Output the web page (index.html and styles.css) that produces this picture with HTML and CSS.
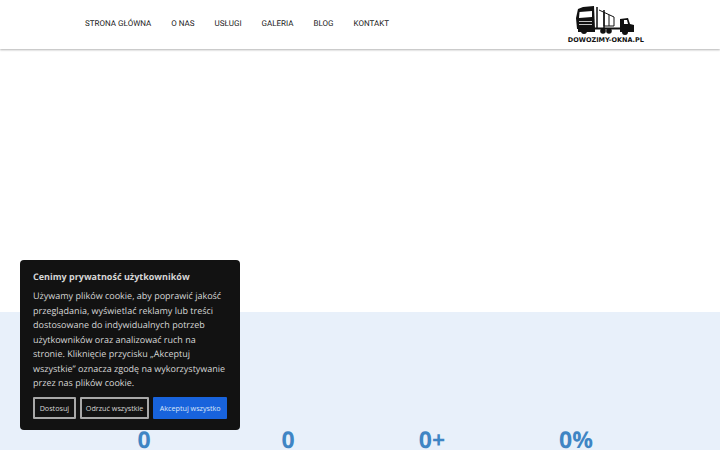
FILE: index.html
```html
<!DOCTYPE html>
<html lang="pl">
<head>
    <meta charset="UTF-8">
    <meta name="viewport" content="width=device-width, initial-scale=1.0">
    <title>Dowozimy-okna.pl</title>
    <link rel="stylesheet" href="styles.css">
</head>
<body>
    <header class="site-header">
        <nav class="main-nav">
            <a href="#">Strona główna</a>
            <a href="#">O nas</a>
            <a href="#">Usługi</a>
            <a href="#">Galeria</a>
            <a href="#">Blog</a>
            <a href="#">Kontakt</a>
        </nav>
        <a class="logo" href="#">
            <svg class="logo-truck" width="60" height="30" viewBox="0 0 60 30">
                <!-- big cab -->
                <path d="M2 3 L7 1 L18 0 L19 23 L1 23 L0 12 Z" fill="#111"/>
                <path d="M3.500 6 L16 5 L16 11 L3 12 Z" fill="#fff"/>
                <path d="M3 15 H16 V15.800 H3 Z M3 18 H16 V18.800 H3 Z" fill="#fff"/>
                <rect x="2" y="23" width="17" height="3" fill="#111"/>
                <circle cx="8" cy="25" r="3" fill="#111"/>
                <!-- window rack -->
                <path d="M21 1 V22 M28 4 V22" stroke="#111" stroke-width="1.500" fill="none"/>
                <path d="M23 4 L38 11 V20 H28 M28 6.500 V20 M33 9 V20" stroke="#111" stroke-width="1" fill="none"/>
                <rect x="18" y="21.500" width="28" height="2" fill="#111"/>
                <circle cx="27" cy="25" r="2.800" fill="#111"/>
                <circle cx="33" cy="25" r="2.800" fill="#111"/>
                <!-- small cab -->
                <path d="M44 13 L52 12 L54 18 L58 19 L58 26 L44 26 Z" fill="#111"/>
                <path d="M48 14 L51 14 L52 18 L48 18 Z" fill="#fff"/>
                <circle cx="49" cy="26" r="3" fill="#111"/>
            </svg>
            <span class="logo-name">DOWOZIMY-OKNA.PL</span>
        </a>
    </header>

    <main>
        <section class="hero"></section>
        <section class="stats">
            <div class="stat">0</div>
            <div class="stat">0</div>
            <div class="stat">0+</div>
            <div class="stat">0%</div>
        </section>
    </main>

    <div class="cookie-box">
        <h2>Cenimy prywatność użytkowników</h2>
        <p>Używamy plików cookie, aby poprawić jakość przeglądania, wyświetlać reklamy lub treści dostosowane do indywidualnych potrzeb użytkowników oraz analizować ruch na stronie. Kliknięcie przycisku „Akceptuj wszystkie” oznacza zgodę na wykorzystywanie przez nas plików cookie.</p>
        <div class="cookie-buttons">
            <button class="btn-outline btn-customize">Dostosuj</button>
            <button class="btn-outline btn-reject">Odrzuć wszystkie</button>
            <button class="btn-accept">Akceptuj wszystko</button>
        </div>
    </div>
</body>
</html>
```

FILE: styles.css
```css
html, body {
    height: 100%;
}
body {
    margin: 0;
    overflow: hidden;
    font-family: 'Open Sans', sans-serif;
    background-color: #fff;
    text-rendering: geometricPrecision;
}
.site-header {
    display: flex;
    justify-content: space-between;
    align-items: flex-start;
    height: 49px;
    padding: 0 76px 0 85px;
    background-color: #fff;
    box-shadow: 0 1px 2px rgba(0,0,0,0.3);
    position: relative;
}
.main-nav {
    display: flex;
    gap: 20px;
    padding-top: 19px;
}
.main-nav a {
    font-family: 'Roboto', sans-serif;
    font-size: 8px;
    line-height: 10px;
    color: #222;
    text-decoration: none;
    text-transform: uppercase;
}
.logo {
    display: flex;
    flex-direction: column;
    align-items: center;
    padding-top: 6px;
    color: #111;
    text-decoration: none;
}
.logo-truck {
    display: block;
}
.logo-name {
    font-family: 'DejaVu Sans', sans-serif;
    font-size: 6.5px;
    font-weight: 700;
    line-height: 8px;
    white-space: nowrap;
}
.hero {
    height: 263px;
}
.stats {
    display: grid;
    grid-template-columns: repeat(4, 144px);
    justify-content: center;
    height: 138px;
    padding-top: 112px;
    box-sizing: border-box;
    background-color: #e8f0fa;
}
.stat {
    text-align: center;
    font-size: 23px;
    font-weight: 700;
    line-height: 30px;
    color: #3f85c4;
}

/* Cookie consent */
.cookie-box {
    position: fixed;
    left: 20px;
    top: 260px;
    width: 220px;
    height: 170px;
    box-sizing: border-box;
    padding: 10px 13px;
    border-radius: 4px;
    background-color: #121212;
    color: #d6d6d6;
}
.cookie-box h2 {
    margin: 0 0 5px;
    font-size: 9px;
    font-weight: 700;
    line-height: 14px;
}
.cookie-box p {
    margin: 0 0 6.5px;
    font-size: 9px;
    line-height: 14.5px;
}
.cookie-buttons {
    display: flex;
    gap: 4px;
}
.cookie-buttons button {
    height: 22px;
    padding: 0;
    font-family: 'Open Sans', sans-serif;
    font-size: 7.2px;
    border-radius: 1px;
    cursor: pointer;
}
.btn-outline {
    background-color: transparent;
    color: #d6d6d6;
    border: 2px solid #a8a8a8;
}
.btn-customize {
    width: 43px;
}
.btn-reject {
    width: 70px;
}
.btn-accept {
    width: 74px;
    background-color: #1863dc;
    color: #dbe6f8;
    border: none;
}
```
